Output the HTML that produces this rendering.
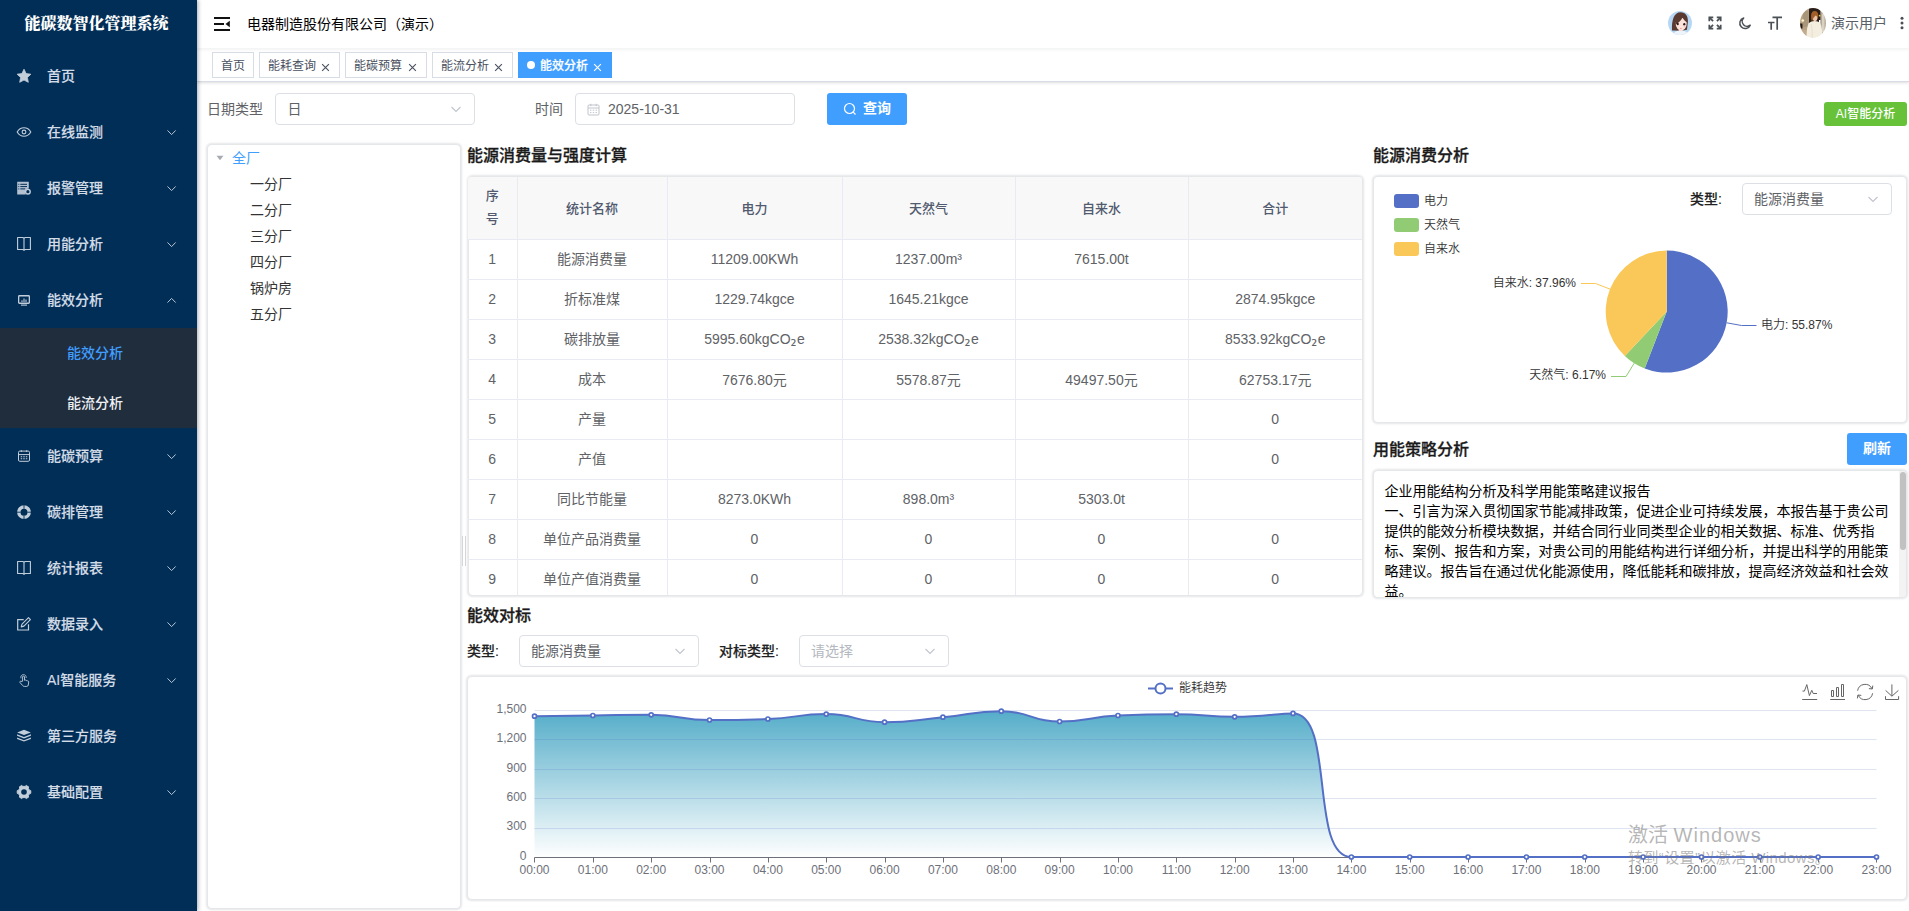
<!DOCTYPE html>
<html lang="zh-CN">
<head>
<meta charset="utf-8">
<title>能碳数智化管理系统</title>
<style>
*{box-sizing:border-box;margin:0;padding:0}
html,body{width:1909px;height:911px;overflow:hidden;background:#fff}
body{font-family:"Liberation Sans","Noto Sans CJK SC",sans-serif;font-size:14px;color:#606266;position:relative}
.abs{position:absolute}
#side{position:absolute;left:0;top:0;width:197px;height:911px;background:#002e56;box-shadow:1px 0 4px rgba(0,21,41,.35);z-index:5}
#logo{position:absolute;left:-2px;top:0;width:197px;height:48px;line-height:48px;text-align:center;color:#fff;font-weight:900;font-size:16px;font-family:"Liberation Serif","Noto Serif CJK SC",serif}
.mi{position:absolute;left:0;width:197px;height:56px;line-height:56px;color:#fff;font-weight:500;font-size:14px}
.mi .t{position:absolute;left:47px;top:0;color:#d3dce6;-webkit-text-stroke:0.150px #d3dce6}
.mi svg.ic{position:absolute;left:16px;top:20px;width:16px;height:16px;overflow:visible}
.mi svg.ar{position:absolute;left:165.600px;top:22.500px;width:11px;height:11px}
#sub{position:absolute;left:0;top:328px;width:197px;height:100px;background:#1f2d3d}
.smi{position:absolute;left:67px;height:50px;line-height:50px;font-size:14px;font-weight:500;color:#eef0f3}
#nav{position:absolute;left:197px;top:0;width:1712px;height:48px;background:#fff;box-shadow:0 1px 4px rgba(0,21,41,.08);z-index:2}
#tags{position:absolute;left:197px;top:48px;width:1712px;height:34px;background:#fff;border-bottom:1px solid #d8dce5;box-shadow:0 1px 3px 0 rgba(0,0,0,.12),0 0 3px 0 rgba(0,0,0,.04)}
.tag{position:absolute;top:4px;height:26px;line-height:26px;border:1px solid #d8dce5;color:#495060;background:#fff;font-size:12px;white-space:nowrap;text-align:left}
.tag span.n{position:absolute;top:0}
.tag.on{background:#409eff;border-color:#409eff;color:#fff;font-weight:500;-webkit-text-stroke:0.200px #fff}
.tag svg{position:absolute;top:9.500px;width:9px;height:9px}
.lbl{position:absolute;font-size:14px;color:#606266;white-space:nowrap;line-height:20px}
.lblb{position:absolute;font-size:14px;color:#222;font-weight:500;-webkit-text-stroke:0.150px #222;white-space:nowrap;line-height:20px}
.inp{position:absolute;height:32px;border:1px solid #dcdfe6;border-radius:4px;background:#fff;line-height:30px;font-size:14px;color:#606266;white-space:nowrap}
.inp .v{position:absolute;left:12px;top:0}
.inp svg.dn{position:absolute;right:12px;top:9px;width:12px;height:12px}
.card{position:absolute;background:#fff;border-radius:4px;box-shadow:0 0 2px 1.500px rgba(0,15,40,.105)}
.h{position:absolute;font-size:16px;font-weight:500;-webkit-text-stroke:0.300px #1a1a1a;color:#1a1a1a;white-space:nowrap;line-height:22px}
.btn{position:absolute;background:#409eff;color:#fff;border-radius:3px;text-align:center;font-weight:700;white-space:nowrap}
#tbl{position:absolute;left:468px;top:177px;width:894px;height:418px;overflow:hidden;border-radius:3px}
#tbl table{border-collapse:collapse;table-layout:fixed;width:894px}
#tbl td,#tbl th{border-right:1px solid #e8ebf3;border-bottom:1px solid #e8ebf3;text-align:center;font-size:14px;color:#606266;font-weight:400;height:40px;padding:0}
#tbl th{background:#f8f8f9;color:#515a6e;font-weight:500;font-size:13px;height:62px;line-height:23px;padding-top:2px}
#tbl td:last-child,#tbl th:last-child{border-right:none}
#tbl th:first-child{padding-top:0;padding-bottom:1px}
#tbl td:nth-child(2){padding-bottom:2px}
.tr{position:absolute;font-size:14px;color:#333;white-space:nowrap;line-height:26px}
#rep{position:absolute;left:1385px;top:481px;width:510px;font-size:14px;line-height:20px;color:#000;word-break:break-all}
svg text{font-family:"Liberation Sans","Noto Sans CJK SC",sans-serif;font-weight:350}
</style>
</head>
<body>
<div id="side">
<div id="logo">能碳数智化管理系统</div>
<div class="mi" style="top:48px"><svg class="ic" viewBox="0 0 16 16"><path d="M8 1.2l2.1 4.4 4.8.6-3.5 3.3.9 4.8L8 12l-4.3 2.3.9-4.8L1.1 6.2l4.8-.6z" fill="#c3cedb" stroke="#c3cedb" stroke-width="0.8" stroke-linejoin="round"/></svg><span class="t">首页</span></div>
<div class="mi" style="top:104px"><svg class="ic" viewBox="0 0 16 16"><path d="M1.2 8C2.8 5.2 5.2 3.8 8 3.8s5.200 1.400 6.800 4.200C13.200 10.800 10.800 12.200 8 12.200S2.800 10.800 1.200 8z" fill="none" stroke="#c3cedb" stroke-width="1.1"/><circle cx="8" cy="8" r="1.900" fill="none" stroke="#c3cedb" stroke-width="1.1"/></svg><span class="t">在线监测</span><svg class="ar" viewBox="0 0 11 11"><path d="M1.500 3.400l4.100 4.200 4.100-4.200" fill="none" stroke="#b9c5d3" stroke-width="1"/></svg></div>
<div class="mi" style="top:160px"><svg class="ic" viewBox="0 0 16 16"><path d="M1.2 1.800h11.600v6.800a3.700 3.700 0 0 0-3 5.900H1.200z" fill="#c3cedb" opacity=".92"/><path d="M4.300 4.300h6.700M4.300 6.600h6.700M4.300 8.900h5" stroke="#002e56" stroke-width="1"/><path d="M2.300 4.300h1M2.300 6.600h1M2.300 8.900h1" stroke="#002e56" stroke-width="1"/><circle cx="11.900" cy="11.700" r="2.300" fill="none" stroke="#c3cedb" stroke-width="1.400"/></svg><span class="t">报警管理</span><svg class="ar" viewBox="0 0 11 11"><path d="M1.500 3.400l4.100 4.200 4.100-4.200" fill="none" stroke="#b9c5d3" stroke-width="1"/></svg></div>
<div class="mi" style="top:216px"><svg class="ic" viewBox="0 0 16 16"><path d="M1.600 1.500h5.200l1.200.8 1.200-.8h5.200v12H9.200l-1.200.8-1.200-.8H1.600z M8 2.300v12" fill="none" stroke="#c3cedb" stroke-width="1.100" stroke-linejoin="round"/></svg><span class="t">用能分析</span><svg class="ar" viewBox="0 0 11 11"><path d="M1.500 3.400l4.100 4.200 4.100-4.200" fill="none" stroke="#b9c5d3" stroke-width="1"/></svg></div>
<div class="mi" style="top:272px"><svg class="ic" viewBox="0 0 16 16"><rect x="2.650" y="3.750" width="10.700" height="7.500" rx="0.800" fill="none" stroke="#c3cedb" stroke-width="1.300"/><path d="M6 10V8.300M8 10V6.500M10 10V7.500" stroke="#c3cedb" stroke-width="1.100"/><path d="M5 13.100h6" stroke="#c3cedb" stroke-width="1.100"/></svg><span class="t">能效分析</span><svg class="ar" viewBox="0 0 11 11"><path d="M1.500 7.600l4.100-4.200 4.100 4.200" fill="none" stroke="#b9c5d3" stroke-width="1"/></svg></div>
<div class="mi" style="top:428px"><svg class="ic" viewBox="0 0 16 16"><rect x="2.500" y="3.100" width="11" height="10.200" rx="1.300" fill="none" stroke="#c3cedb" stroke-width="1"/><path d="M2.500 6.600h11M5.300 2.200v1.800M10.700 2.200v1.800" stroke="#c3cedb" stroke-width="1"/><path d="M4.700 8.800h1.500M7.250 8.800h1.500M9.800 8.800h1.500M4.700 10.700h1.500M7.250 10.700h1.500M9.800 10.700h1.500" stroke="#c3cedb" stroke-width="1.100"/></svg><span class="t">能碳预算</span><svg class="ar" viewBox="0 0 11 11"><path d="M1.500 3.400l4.100 4.200 4.100-4.200" fill="none" stroke="#b9c5d3" stroke-width="1"/></svg></div>
<div class="mi" style="top:484px"><svg class="ic" viewBox="0 0 16 16"><circle cx="8" cy="8.200" r="5.200" fill="none" stroke="#c3cedb" stroke-width="3.400"/><path d="M8 0.500v4.200M8 11.700v4.200M0.500 8.200h4.200M11.300 8.200h4.200" stroke="#002e56" stroke-width="0.900"/></svg><span class="t">碳排管理</span><svg class="ar" viewBox="0 0 11 11"><path d="M1.500 3.400l4.100 4.200 4.100-4.200" fill="none" stroke="#b9c5d3" stroke-width="1"/></svg></div>
<div class="mi" style="top:540px"><svg class="ic" viewBox="0 0 16 16"><path d="M1.600 1.500h5.200l1.200.8 1.200-.8h5.200v12H9.200l-1.200.8-1.200-.8H1.600z M8 2.300v12" fill="none" stroke="#c3cedb" stroke-width="1.100" stroke-linejoin="round"/></svg><span class="t">统计报表</span><svg class="ar" viewBox="0 0 11 11"><path d="M1.500 3.400l4.100 4.200 4.100-4.200" fill="none" stroke="#b9c5d3" stroke-width="1"/></svg></div>
<div class="mi" style="top:596px"><svg class="ic" viewBox="0 0 16 16"><path d="M12.500 8.300v5.700H1.700V3.600h6" fill="none" stroke="#c3cedb" stroke-width="1.200"/><path d="M5.200 10.900l.8-2.700 6.500-6.500 1.900 1.900-6.500 6.500z" fill="none" stroke="#c3cedb" stroke-width="1.100" stroke-linejoin="round"/></svg><span class="t">数据录入</span><svg class="ar" viewBox="0 0 11 11"><path d="M1.500 3.400l4.100 4.200 4.100-4.200" fill="none" stroke="#b9c5d3" stroke-width="1"/></svg></div>
<div class="mi" style="top:652px"><svg class="ic" viewBox="0 0 16 16"><path d="M6.600 9.300V5a.95.95 0 0 1 1.900 0v3.300l.9-.3c.5-.1.900.1 1 .6.500-.3 1.100-.1 1.200.5.600-.2 1.100.2 1.100.8l-.4 3.100c-.1.800-.7 1.400-1.500 1.400H8.300c-.7 0-1.200-.3-1.600-.8L3.900 10.400c-.5-.7.400-1.500 1.100-1z" fill="none" stroke="#c3cedb" stroke-width="0.900" stroke-linejoin="round"/><path d="M5 6.300a2.700 2.700 0 1 1 5.100-.3" fill="none" stroke="#c3cedb" stroke-width="0.800"/></svg><span class="t">AI智能服务</span><svg class="ar" viewBox="0 0 11 11"><path d="M1.500 3.400l4.100 4.200 4.100-4.200" fill="none" stroke="#b9c5d3" stroke-width="1"/></svg></div>
<div class="mi" style="top:708px"><svg class="ic" viewBox="0 0 16 16"><path d="M8 1.700l6.900 2.700L8 7.100 1.100 4.400z" fill="#c3cedb"/><path d="M1.100 6.300L8 9l6.900-2.700v1.400L8 10.400 1.100 7.700zM1.100 9.500L8 12.200l6.900-2.700v1.400L8 13.600 1.100 10.900z" fill="#c3cedb"/></svg><span class="t">第三方服务</span></div>
<div class="mi" style="top:764px"><svg class="ic" viewBox="0 0 16 16"><path d="M14.76 6.63 L14.76 9.37 L13.40 9.81 L12.27 11.77 L12.57 13.17 L10.19 14.54 L9.13 13.59 L6.87 13.59 L5.81 14.54 L3.43 13.17 L3.73 11.77 L2.60 9.81 L1.24 9.37 L1.24 6.63 L2.60 6.19 L3.73 4.23 L3.43 2.83 L5.81 1.46 L6.87 2.41 L9.13 2.41 L10.19 1.46 L12.57 2.83 L12.27 4.23 L13.40 6.19z" fill="#c3cedb" stroke="#c3cedb" stroke-width="1" stroke-linejoin="round"/><circle cx="8" cy="8" r="2.800" fill="#002e56"/></svg><span class="t">基础配置</span><svg class="ar" viewBox="0 0 11 11"><path d="M1.500 3.400l4.100 4.200 4.100-4.200" fill="none" stroke="#b9c5d3" stroke-width="1"/></svg></div>
<div id="sub"><div class="smi" style="top:0;color:#409eff">能效分析</div><div class="smi" style="top:50px">能流分析</div></div>
</div>
<div id="nav">
<svg class="abs" style="left:16px;top:15px" width="18" height="18" viewBox="0 0 18 18"><path d="M1 3h16M1 9h10M1 15h16" stroke="#111" stroke-width="1.900"/><path d="M16.800 5.800v6.400l-4.300-3.200z" fill="#111"/></svg>
<div class="abs" style="left:50px;top:0;line-height:48.500px;font-size:14px;color:#000;white-space:nowrap">电器制造股份有限公司（演示）</div>
<svg class="abs" style="left:1471px;top:11px" width="24" height="24" viewBox="0 0 24 24"><defs><clipPath id="c1"><circle cx="12" cy="12" r="12"/></clipPath><filter id="b1" x="-10%" y="-10%" width="120%" height="120%"><feGaussianBlur stdDeviation="0.350"/></filter></defs><circle cx="12" cy="12" r="12" fill="#b5d8f7"/><g clip-path="url(#c1)" filter="url(#b1)"><path d="M4 19.500C3.500 9 6 1.200 12.500 1.200c5.500 0 8 4.500 7.300 10.300l-.8 7.300-5.500 1z" fill="#5a3a31"/><path d="M10.800 17h4v7h-4z" fill="#f7d3c6"/><path d="M5 24c1-3 3.500-4 5.800-4.200h4c2.500.2 4.200 1.200 5.200 4.200z" fill="#eef4fa"/><ellipse cx="13.200" cy="13" rx="5.500" ry="6.300" fill="#fbe2da"/><path d="M7.500 13.500C7 8 10 4.500 15.500 4.200c2.500 1 4 3.500 4 7.300-2.500-1.200-4.200-3-5-5.200-1.200 3-3.500 5.500-7 7.200z" fill="#5a3a31"/><ellipse cx="9.700" cy="13" rx="1.100" ry="1.200" fill="#2e1a18"/><ellipse cx="16.300" cy="13.300" rx="1.100" ry="1.200" fill="#2e1a18"/><ellipse cx="12.900" cy="17.400" rx="0.900" ry="0.500" fill="#ee8c8c"/><circle cx="16.800" cy="15.600" r="1.100" fill="#f9c3bd" opacity=".7"/></g></svg>
<svg class="abs" style="left:1511px;top:16px" width="14" height="14" viewBox="0 0 16 16"><g fill="none" stroke="#4a5056" stroke-width="2"><path d="M1.500 6V1.500H6M10 1.500h4.500V6M14.500 10v4.500H10M6 14.500H1.500V10"/><path d="M1.800 1.800l4 4M14.200 1.800l-4 4M14.200 14.200l-4-4M1.800 14.200l4-4"/></g></svg>
<svg class="abs" style="left:1541px;top:16px" width="14" height="14" viewBox="0 0 16 16"><path d="M6.500 2.200A6.200 6.200 0 1 0 14 10.500 5.600 5.600 0 0 1 6.500 2.200z" fill="none" stroke="#4a5056" stroke-width="1.700" stroke-linejoin="round"/></svg>
<svg class="abs" style="left:1570px;top:15px" width="16" height="16" viewBox="0 0 16 16"><path d="M5.500 2.300h9.500M10.200 2.300v12.500M1 7.500h6.500M4.200 7.500v7.300" fill="none" stroke="#4a5056" stroke-width="1.700"/></svg>
<svg class="abs" style="left:1603px;top:8px" width="26" height="30" viewBox="0 0 26 30"><defs><clipPath id="c2"><ellipse cx="13" cy="15" rx="13" ry="15"/></clipPath><filter id="b2" x="-10%" y="-10%" width="120%" height="120%"><feGaussianBlur stdDeviation="0.600"/></filter></defs><g clip-path="url(#c2)"><g filter="url(#b2)"><rect x="-2" y="-2" width="30" height="34" fill="#b8a284"/><rect x="3" y="3" width="5.500" height="16" fill="#a8967a"/><rect x="9" y="-2" width="11.600" height="17" fill="#2b1e14"/><rect x="20.600" y="-2" width="8" height="28" fill="#b5aa98"/><rect x="22" y="6" width="2.500" height="18" fill="#d9d2c4"/><path d="M-1 22h8v10h-8z" fill="#c2aa8c"/><rect x="0" y="15.500" width="2.500" height="5" fill="#2a1c12"/><circle cx="2.800" cy="12.500" r="1.300" fill="#fff3c8"/><circle cx="19.600" cy="7.700" r="0.900" fill="#e8c860"/><ellipse cx="14.700" cy="7.500" rx="3.500" ry="4.500" fill="#a35f2c"/><ellipse cx="15" cy="10.300" rx="2.300" ry="2.800" fill="#e9c4ae"/><path d="M11.300 9c.3-4 2-5.500 4-5.500 1 1.500.5 4-1 5.500-1 1-1.800 2.500-2 4.500-1-1-1.200-3-1-4.500z" fill="#a35f2c"/><rect x="19" y="12" width="1.500" height="3" fill="#fff"/><path d="M6.500 32c0-8 .5-13 2-16.500 2-1.800 4-2.500 6-2.500s4.500.7 6 2.500c1.500 4 2 9 2 16.500z" fill="#f4eee0"/><path d="M11 16c1 3 1.500 8 1 14" stroke="#e4d9c6" stroke-width="0.800" fill="none"/></g></g></svg>
<div class="abs" style="left:1634px;top:0;line-height:46px;font-size:14px;color:#5a5e66;white-space:nowrap">演示用户</div>
<svg class="abs" style="left:1703px;top:16px" width="4" height="14" viewBox="0 0 4 14"><circle cx="2" cy="2.200" r="1.500" fill="#4a5056"/><circle cx="2" cy="7" r="1.500" fill="#4a5056"/><circle cx="2" cy="11.800" r="1.500" fill="#4a5056"/></svg>
</div>
<div id="tags">
<div class="tag" style="left:15px;width:42px"><span class="n" style="left:8px">首页</span></div>
<div class="tag" style="left:62px;width:81px"><span class="n" style="left:8px">能耗查询</span><svg style="left:61px" viewBox="0 0 8 8"><path d="M1 1l6 6M7 1l-6 6" stroke="#495060" stroke-width="1"/></svg></div>
<div class="tag" style="left:148px;width:82px"><span class="n" style="left:8px">能碳预算</span><svg style="left:62px" viewBox="0 0 8 8"><path d="M1 1l6 6M7 1l-6 6" stroke="#495060" stroke-width="1"/></svg></div>
<div class="tag" style="left:235px;width:81px"><span class="n" style="left:8px">能流分析</span><svg style="left:61px" viewBox="0 0 8 8"><path d="M1 1l6 6M7 1l-6 6" stroke="#495060" stroke-width="1"/></svg></div>
<div class="tag on" style="left:321px;width:94px"><span class="abs" style="left:8px;top:8px;width:8px;height:8px;border-radius:50%;background:#fff"></span><span class="n" style="left:21px">能效分析</span><svg style="left:74px" viewBox="0 0 8 8"><path d="M1 1l6 6M7 1l-6 6" stroke="#fff" stroke-width="1"/></svg></div>
</div>
<div class="lbl" style="left:207px;top:99px">日期类型</div>
<div class="inp" style="left:275px;top:93px;width:200px"><span class="v" style="left:11.500px">日</span><svg class="dn" viewBox="0 0 12 12"><path d="M1.500 4l4.500 4.500L10.500 4" fill="none" stroke="#c0c4cc" stroke-width="1.100"/></svg></div>
<div class="lbl" style="left:535px;top:99px">时间</div>
<div class="inp" style="left:575px;top:93px;width:220px"><svg class="abs" style="left:11px;top:9px" width="13" height="13" viewBox="0 0 13 13"><rect x="1" y="2" width="11" height="10" rx="1" fill="none" stroke="#c0c4cc" stroke-width="1"/><path d="M1 5h11M3.800 0.800v2.400M9.200 0.800v2.400" stroke="#c0c4cc" stroke-width="1"/><path d="M3 7.200h1.400M5.800 7.200h1.400M8.600 7.200h1.400M3 9.600h1.400M5.800 9.600h1.400M8.600 9.600h1.400" stroke="#c0c4cc" stroke-width="1"/></svg><span class="v" style="left:32px">2025-10-31</span></div>
<div class="btn" style="left:827px;top:93px;width:80px;height:32px;line-height:31px;font-size:14px"><svg class="abs" style="left:16px;top:9px" width="14" height="14" viewBox="0 0 14 14"><circle cx="6.500" cy="6.500" r="5" fill="none" stroke="#fff" stroke-width="1.200"/><path d="M10.200 10.200l2.300 2.300" stroke="#fff" stroke-width="1.200"/></svg><span class="abs" style="left:36px;top:0">查询</span></div>
<div class="btn" style="left:1824px;top:102px;width:83px;height:24px;line-height:24px;font-size:12px;background:#67c23a;border-radius:3px;font-weight:500">AI智能分析</div>
<div class="card" style="left:208px;top:145px;width:252px;height:763px"></div>
<svg class="abs" style="left:216px;top:154px" width="8" height="8" viewBox="0 0 8 8"><path d="M0.500 1.800h7L4 6.200z" fill="#a8abb2"/></svg>
<div class="tr" style="left:232px;top:145px;color:#409eff">全厂</div>
<div class="tr" style="left:250px;top:171px">一分厂</div>
<div class="tr" style="left:250px;top:197px">二分厂</div>
<div class="tr" style="left:250px;top:223px">三分厂</div>
<div class="tr" style="left:250px;top:249px">四分厂</div>
<div class="tr" style="left:250px;top:275px">锅炉房</div>
<div class="tr" style="left:250px;top:301px">五分厂</div>
<div class="abs" style="left:462px;top:536px;width:1px;height:30px;background:#d6d6d6"></div><div class="abs" style="left:465px;top:536px;width:1px;height:30px;background:#d6d6d6"></div>
<div class="h" style="left:467px;top:145px">能源消费量与强度计算</div>
<div class="card" style="left:469px;top:177px;width:893px;height:418px"></div>
<div id="tbl"><table><colgroup><col style="width:49px"><col style="width:150px"><col style="width:175px"><col style="width:173px"><col style="width:173px"><col style="width:174px"></colgroup>
<tr><th>序<br>号</th><th>统计名称</th><th>电力</th><th>天然气</th><th>自来水</th><th>合计</th></tr>
<tr><td>1</td><td>能源消费量</td><td>11209.00KWh</td><td>1237.00m³</td><td>7615.00t</td><td></td></tr>
<tr><td>2</td><td>折标准煤</td><td>1229.74kgce</td><td>1645.21kgce</td><td></td><td>2874.95kgce</td></tr>
<tr><td>3</td><td>碳排放量</td><td>5995.60kgCO<span style="font-family:'DejaVu Sans',sans-serif;font-size:15px;line-height:0;letter-spacing:0.500px;position:relative;top:1.500px">₂</span>e</td><td>2538.32kgCO<span style="font-family:'DejaVu Sans',sans-serif;font-size:15px;line-height:0;letter-spacing:0.500px;position:relative;top:1.500px">₂</span>e</td><td></td><td>8533.92kgCO<span style="font-family:'DejaVu Sans',sans-serif;font-size:15px;line-height:0;letter-spacing:0.500px;position:relative;top:1.500px">₂</span>e</td></tr>
<tr><td>4</td><td>成本</td><td>7676.80元</td><td>5578.87元</td><td>49497.50元</td><td>62753.17元</td></tr>
<tr><td>5</td><td>产量</td><td></td><td></td><td></td><td>0</td></tr>
<tr><td>6</td><td>产值</td><td></td><td></td><td></td><td>0</td></tr>
<tr><td>7</td><td>同比节能量</td><td>8273.0KWh</td><td>898.0m³</td><td>5303.0t</td><td></td></tr>
<tr><td>8</td><td>单位产品消费量</td><td>0</td><td>0</td><td>0</td><td>0</td></tr>
<tr><td>9</td><td>单位产值消费量</td><td>0</td><td>0</td><td>0</td><td>0</td></tr>
</table></div><div class="h" style="left:1373px;top:145px">能源消费分析</div>
<div class="card" style="left:1374px;top:177px;width:532px;height:245px"></div>
<div class="lblb" style="left:1690px;top:189px">类型:</div>
<div class="inp" style="left:1742px;top:183px;width:150px"><span class="v" style="left:11px">能源消费量</span><svg class="dn" viewBox="0 0 12 12"><path d="M1.500 4l4.500 4.500L10.500 4" fill="none" stroke="#c0c4cc" stroke-width="1.100"/></svg></div>
<svg class="abs" style="left:1374px;top:177px" width="532" height="245" viewBox="0 0 532 245"><path d="M292.70 134.60 L292.70 73.60 A61 61 0 1 1 270.71 191.50 z" fill="#5470c6"/><path d="M292.70 134.60 L270.71 191.50 A61 61 0 0 1 250.83 178.96 z" fill="#91cc75"/><path d="M292.70 134.60 L250.83 178.96 A61 61 0 0 1 292.70 73.60 z" fill="#fac858"/><rect x="20" y="17" width="25" height="14" rx="3" fill="#5470c6"/><text x="50" y="28" font-size="12" fill="#333">电力</text><rect x="20" y="41" width="25" height="14" rx="3" fill="#91cc75"/><text x="50" y="52" font-size="12" fill="#333">天然气</text><rect x="20" y="65" width="25" height="14" rx="3" fill="#fac858"/><text x="50" y="76" font-size="12" fill="#333">自来水</text><path d="M352.7 145.8 L367.5 148.5 L382.5 148.5" fill="none" stroke="#5470c6" stroke-width="1"/><text x="387" y="152" font-size="12" fill="#333">电力: 55.87%</text><path d="M260.2 186.2 L252.0 199.5 L237.0 199.5" fill="none" stroke="#91cc75" stroke-width="1"/><text x="232" y="202" font-size="12" fill="#333" text-anchor="end">天然气: 6.17%</text><path d="M236.0 112.1 L221.5 106.5 L207.0 106.5" fill="none" stroke="#fac858" stroke-width="1"/><text x="202" y="110" font-size="12" fill="#333" text-anchor="end">自来水: 37.96%</text></svg>
<div class="h" style="left:1373px;top:439px">用能策略分析</div>
<div class="btn" style="left:1847px;top:433px;width:60px;height:32px;line-height:31px;font-size:14px">刷新</div>
<div class="card" style="left:1374px;top:471px;width:532px;height:126px;overflow:hidden"><div class="abs" style="left:525px;top:0;width:7px;height:127px;background:#f3f3f3"></div><div class="abs" style="left:526px;top:1px;width:6px;height:78px;border-radius:3px;background:#c1c1c1"></div></div>
<div class="abs" style="left:1374px;top:471px;width:520px;height:126px;overflow:hidden"><div id="rep" style="left:10.500px;top:10px">企业用能结构分析及科学用能策略建议报告<br>一、引言为深入贯彻国家节能减排政策，促进企业可持续发展，本报告基于贵公司<br>提供的能效分析模块数据，并结合同行业同类型企业的相关数据、标准、优秀指<br>标、案例、报告和方案，对贵公司的用能结构进行详细分析，并提出科学的用能策<br>略建议。报告旨在通过优化能源使用，降低能耗和碳排放，提高经济效益和社会效<br>益。<br>二、用能结构分析</div></div>
<div class="h" style="left:467px;top:605px">能效对标</div>
<div class="lblb" style="left:467px;top:641px">类型:</div>
<div class="inp" style="left:519px;top:635px;width:180px"><span class="v" style="left:11px">能源消费量</span><svg class="dn" viewBox="0 0 12 12"><path d="M1.500 4l4.500 4.500L10.500 4" fill="none" stroke="#c0c4cc" stroke-width="1.100"/></svg></div>
<div class="lblb" style="left:719px;top:641px">对标类型:</div>
<div class="inp" style="left:799px;top:635px;width:150px"><span class="v" style="left:11px;color:#b4b8c0">请选择</span><svg class="dn" viewBox="0 0 12 12"><path d="M1.500 4l4.500 4.500L10.500 4" fill="none" stroke="#c0c4cc" stroke-width="1.100"/></svg></div>
<div class="card" style="left:468px;top:677px;width:1438px;height:222px"></div>
<svg class="abs" style="left:468px;top:677px" width="1438" height="222" viewBox="0 0 1438 222"><defs><linearGradient id="ga" x1="0" y1="0" x2="0" y2="1"><stop offset="0" stop-color="#55adc9"/><stop offset="1" stop-color="#ffffff"/></linearGradient></defs><path d="M66.5 151.5 H1408.5" stroke="#dfe5f0" stroke-width="1"/><path d="M66.5 121.5 H1408.5" stroke="#dfe5f0" stroke-width="1"/><path d="M66.5 92.5 H1408.5" stroke="#dfe5f0" stroke-width="1"/><path d="M66.5 62.5 H1408.5" stroke="#dfe5f0" stroke-width="1"/><path d="M66.5 33.5 H1408.5" stroke="#dfe5f0" stroke-width="1"/><text x="58.5" y="182.7" font-size="12" fill="#6e7079" text-anchor="end">0</text><text x="58.5" y="153.3" font-size="12" fill="#6e7079" text-anchor="end">300</text><text x="58.5" y="123.9" font-size="12" fill="#6e7079" text-anchor="end">600</text><text x="58.5" y="94.5" font-size="12" fill="#6e7079" text-anchor="end">900</text><text x="58.5" y="65.1" font-size="12" fill="#6e7079" text-anchor="end">1,200</text><text x="58.5" y="35.7" font-size="12" fill="#6e7079" text-anchor="end">1,500</text><clipPath id="ca"><path d="M66.50 39.20 C66.50 39.20 95.67 38.85 124.85 38.50 C154.02 38.15 154.08 37.80 183.20 37.80 C212.43 37.80 212.31 43.00 241.54 43.00 C270.66 43.00 270.77 43.00 299.89 42.00 C329.11 41.00 329.15 37.10 358.24 37.10 C387.50 37.10 387.33 45.20 416.59 45.20 C445.68 45.20 445.78 42.95 474.93 40.20 C504.13 37.45 504.26 34.20 533.28 34.20 C562.60 34.20 562.31 44.50 591.63 44.50 C620.66 44.50 620.73 39.81 649.98 38.50 C679.08 37.20 679.16 37.20 708.33 37.20 C737.51 37.20 737.51 39.80 766.67 39.80 C795.86 39.80 809.04 36.40 825.02 36.40 C867.39 36.40 840.98 180.00 883.37 180.00 C899.33 180.00 912.54 180.00 941.72 180.00 C970.89 180.00 970.89 180.00 1000.07 180.00 C1029.24 180.00 1029.24 180.00 1058.41 180.00 C1087.59 180.00 1087.59 180.00 1116.76 180.00 C1145.93 180.00 1145.93 180.00 1175.11 180.00 C1204.28 180.00 1204.28 180.00 1233.46 180.00 C1262.63 180.00 1262.63 180.00 1291.80 180.00 C1320.98 180.00 1320.98 180.00 1350.15 180.00 C1379.33 180.00 1408.50 180.00 1408.50 180.00 L1408.50 180.50 L66.50 180.50 z"/></clipPath><path d="M66.50 39.20 C66.50 39.20 95.67 38.85 124.85 38.50 C154.02 38.15 154.08 37.80 183.20 37.80 C212.43 37.80 212.31 43.00 241.54 43.00 C270.66 43.00 270.77 43.00 299.89 42.00 C329.11 41.00 329.15 37.10 358.24 37.10 C387.50 37.10 387.33 45.20 416.59 45.20 C445.68 45.20 445.78 42.95 474.93 40.20 C504.13 37.45 504.26 34.20 533.28 34.20 C562.60 34.20 562.31 44.50 591.63 44.50 C620.66 44.50 620.73 39.81 649.98 38.50 C679.08 37.20 679.16 37.20 708.33 37.20 C737.51 37.20 737.51 39.80 766.67 39.80 C795.86 39.80 809.04 36.40 825.02 36.40 C867.39 36.40 840.98 180.00 883.37 180.00 C899.33 180.00 912.54 180.00 941.72 180.00 C970.89 180.00 970.89 180.00 1000.07 180.00 C1029.24 180.00 1029.24 180.00 1058.41 180.00 C1087.59 180.00 1087.59 180.00 1116.76 180.00 C1145.93 180.00 1145.93 180.00 1175.11 180.00 C1204.28 180.00 1204.28 180.00 1233.46 180.00 C1262.63 180.00 1262.63 180.00 1291.80 180.00 C1320.98 180.00 1320.98 180.00 1350.15 180.00 C1379.33 180.00 1408.50 180.00 1408.50 180.00 L1408.50 180.50 L66.50 180.50 z" fill="url(#ga)"/><g clip-path="url(#ca)"><path d="M66.5 151.5 H883.4" stroke="rgba(84,112,198,0.190)" stroke-width="1"/><path d="M66.5 121.5 H883.4" stroke="rgba(84,112,198,0.190)" stroke-width="1"/><path d="M66.5 92.5 H883.4" stroke="rgba(84,112,198,0.190)" stroke-width="1"/><path d="M66.5 62.5 H883.4" stroke="rgba(84,112,198,0.190)" stroke-width="1"/><path d="M66.5 33.5 H883.4" stroke="rgba(84,112,198,0.190)" stroke-width="1"/></g><path d="M66.5 180.5 H1408.5" stroke="#6e7079" stroke-width="1"/><path d="M66.5 180.5 v5" stroke="#6e7079" stroke-width="1"/><text x="66.5" y="197.0" font-size="12" fill="#6e7079" text-anchor="middle">00:00</text><path d="M125.5 180.5 v5" stroke="#6e7079" stroke-width="1"/><text x="124.8" y="197.0" font-size="12" fill="#6e7079" text-anchor="middle">01:00</text><path d="M183.5 180.5 v5" stroke="#6e7079" stroke-width="1"/><text x="183.2" y="197.0" font-size="12" fill="#6e7079" text-anchor="middle">02:00</text><path d="M242.5 180.5 v5" stroke="#6e7079" stroke-width="1"/><text x="241.5" y="197.0" font-size="12" fill="#6e7079" text-anchor="middle">03:00</text><path d="M300.5 180.5 v5" stroke="#6e7079" stroke-width="1"/><text x="299.9" y="197.0" font-size="12" fill="#6e7079" text-anchor="middle">04:00</text><path d="M358.5 180.5 v5" stroke="#6e7079" stroke-width="1"/><text x="358.2" y="197.0" font-size="12" fill="#6e7079" text-anchor="middle">05:00</text><path d="M417.5 180.5 v5" stroke="#6e7079" stroke-width="1"/><text x="416.6" y="197.0" font-size="12" fill="#6e7079" text-anchor="middle">06:00</text><path d="M475.5 180.5 v5" stroke="#6e7079" stroke-width="1"/><text x="474.9" y="197.0" font-size="12" fill="#6e7079" text-anchor="middle">07:00</text><path d="M533.5 180.5 v5" stroke="#6e7079" stroke-width="1"/><text x="533.3" y="197.0" font-size="12" fill="#6e7079" text-anchor="middle">08:00</text><path d="M592.5 180.5 v5" stroke="#6e7079" stroke-width="1"/><text x="591.6" y="197.0" font-size="12" fill="#6e7079" text-anchor="middle">09:00</text><path d="M650.5 180.5 v5" stroke="#6e7079" stroke-width="1"/><text x="650.0" y="197.0" font-size="12" fill="#6e7079" text-anchor="middle">10:00</text><path d="M708.5 180.5 v5" stroke="#6e7079" stroke-width="1"/><text x="708.3" y="197.0" font-size="12" fill="#6e7079" text-anchor="middle">11:00</text><path d="M767.5 180.5 v5" stroke="#6e7079" stroke-width="1"/><text x="766.7" y="197.0" font-size="12" fill="#6e7079" text-anchor="middle">12:00</text><path d="M825.5 180.5 v5" stroke="#6e7079" stroke-width="1"/><text x="825.0" y="197.0" font-size="12" fill="#6e7079" text-anchor="middle">13:00</text><path d="M883.5 180.5 v5" stroke="#6e7079" stroke-width="1"/><text x="883.4" y="197.0" font-size="12" fill="#6e7079" text-anchor="middle">14:00</text><path d="M942.5 180.5 v5" stroke="#6e7079" stroke-width="1"/><text x="941.7" y="197.0" font-size="12" fill="#6e7079" text-anchor="middle">15:00</text><path d="M1000.5 180.5 v5" stroke="#6e7079" stroke-width="1"/><text x="1000.1" y="197.0" font-size="12" fill="#6e7079" text-anchor="middle">16:00</text><path d="M1058.5 180.5 v5" stroke="#6e7079" stroke-width="1"/><text x="1058.4" y="197.0" font-size="12" fill="#6e7079" text-anchor="middle">17:00</text><path d="M1117.5 180.5 v5" stroke="#6e7079" stroke-width="1"/><text x="1116.8" y="197.0" font-size="12" fill="#6e7079" text-anchor="middle">18:00</text><path d="M1175.5 180.5 v5" stroke="#6e7079" stroke-width="1"/><text x="1175.1" y="197.0" font-size="12" fill="#6e7079" text-anchor="middle">19:00</text><path d="M1233.5 180.5 v5" stroke="#6e7079" stroke-width="1"/><text x="1233.5" y="197.0" font-size="12" fill="#6e7079" text-anchor="middle">20:00</text><path d="M1292.5 180.5 v5" stroke="#6e7079" stroke-width="1"/><text x="1291.8" y="197.0" font-size="12" fill="#6e7079" text-anchor="middle">21:00</text><path d="M1350.5 180.5 v5" stroke="#6e7079" stroke-width="1"/><text x="1350.2" y="197.0" font-size="12" fill="#6e7079" text-anchor="middle">22:00</text><path d="M1408.5 180.5 v5" stroke="#6e7079" stroke-width="1"/><text x="1408.5" y="197.0" font-size="12" fill="#6e7079" text-anchor="middle">23:00</text><path d="M66.50 39.20 C66.50 39.20 95.67 38.85 124.85 38.50 C154.02 38.15 154.08 37.80 183.20 37.80 C212.43 37.80 212.31 43.00 241.54 43.00 C270.66 43.00 270.77 43.00 299.89 42.00 C329.11 41.00 329.15 37.10 358.24 37.10 C387.50 37.10 387.33 45.20 416.59 45.20 C445.68 45.20 445.78 42.95 474.93 40.20 C504.13 37.45 504.26 34.20 533.28 34.20 C562.60 34.20 562.31 44.50 591.63 44.50 C620.66 44.50 620.73 39.81 649.98 38.50 C679.08 37.20 679.16 37.20 708.33 37.20 C737.51 37.20 737.51 39.80 766.67 39.80 C795.86 39.80 809.04 36.40 825.02 36.40 C867.39 36.40 840.98 180.00 883.37 180.00 C899.33 180.00 912.54 180.00 941.72 180.00 C970.89 180.00 970.89 180.00 1000.07 180.00 C1029.24 180.00 1029.24 180.00 1058.41 180.00 C1087.59 180.00 1087.59 180.00 1116.76 180.00 C1145.93 180.00 1145.93 180.00 1175.11 180.00 C1204.28 180.00 1204.28 180.00 1233.46 180.00 C1262.63 180.00 1262.63 180.00 1291.80 180.00 C1320.98 180.00 1320.98 180.00 1350.15 180.00 C1379.33 180.00 1408.50 180.00 1408.50 180.00" fill="none" stroke="#5470c6" stroke-width="2"/><circle cx="66.50" cy="39.20" r="2" fill="#fff" stroke="#5470c6" stroke-width="1.700"/><circle cx="124.85" cy="38.50" r="2" fill="#fff" stroke="#5470c6" stroke-width="1.700"/><circle cx="183.20" cy="37.80" r="2" fill="#fff" stroke="#5470c6" stroke-width="1.700"/><circle cx="241.54" cy="43.00" r="2" fill="#fff" stroke="#5470c6" stroke-width="1.700"/><circle cx="299.89" cy="42.00" r="2" fill="#fff" stroke="#5470c6" stroke-width="1.700"/><circle cx="358.24" cy="37.10" r="2" fill="#fff" stroke="#5470c6" stroke-width="1.700"/><circle cx="416.59" cy="45.20" r="2" fill="#fff" stroke="#5470c6" stroke-width="1.700"/><circle cx="474.93" cy="40.20" r="2" fill="#fff" stroke="#5470c6" stroke-width="1.700"/><circle cx="533.28" cy="34.20" r="2" fill="#fff" stroke="#5470c6" stroke-width="1.700"/><circle cx="591.63" cy="44.50" r="2" fill="#fff" stroke="#5470c6" stroke-width="1.700"/><circle cx="649.98" cy="38.50" r="2" fill="#fff" stroke="#5470c6" stroke-width="1.700"/><circle cx="708.33" cy="37.20" r="2" fill="#fff" stroke="#5470c6" stroke-width="1.700"/><circle cx="766.67" cy="39.80" r="2" fill="#fff" stroke="#5470c6" stroke-width="1.700"/><circle cx="825.02" cy="36.40" r="2" fill="#fff" stroke="#5470c6" stroke-width="1.700"/><circle cx="883.37" cy="180.00" r="2" fill="#fff" stroke="#5470c6" stroke-width="1.700"/><circle cx="941.72" cy="180.00" r="2" fill="#fff" stroke="#5470c6" stroke-width="1.700"/><circle cx="1000.07" cy="180.00" r="2" fill="#fff" stroke="#5470c6" stroke-width="1.700"/><circle cx="1058.41" cy="180.00" r="2" fill="#fff" stroke="#5470c6" stroke-width="1.700"/><circle cx="1116.76" cy="180.00" r="2" fill="#fff" stroke="#5470c6" stroke-width="1.700"/><circle cx="1175.11" cy="180.00" r="2" fill="#fff" stroke="#5470c6" stroke-width="1.700"/><circle cx="1233.46" cy="180.00" r="2" fill="#fff" stroke="#5470c6" stroke-width="1.700"/><circle cx="1291.80" cy="180.00" r="2" fill="#fff" stroke="#5470c6" stroke-width="1.700"/><circle cx="1350.15" cy="180.00" r="2" fill="#fff" stroke="#5470c6" stroke-width="1.700"/><circle cx="1408.50" cy="180.00" r="2" fill="#fff" stroke="#5470c6" stroke-width="1.700"/><path d="M680 11.5 h25" stroke="#5470c6" stroke-width="2"/><circle cx="692.5" cy="11.5" r="5" fill="#fff" stroke="#5470c6" stroke-width="2"/><text x="711" y="15" font-size="12" fill="#333">能耗趋势</text><g fill="none" stroke="#666" stroke-width="1"><path d="M1334.5 14.1 L1336.4 14.1 L1338.8 7.6 L1341.4 18.6 L1343.8 13.3 L1345.2 16.5 L1349.0 16.5 M1334.2 22.5 L1349.2 22.5"/><path d="M1363.5 13.5 h2v6h-2z M1368.5 10.5 h2v9h-2z M1373.5 7.5 h2v12h-2z M1362.2 22.5 L1377.0 22.5"/><path d="M1389.6 13.7 A7.6 7.6 0 0 1 1404.0 11.8"/><path d="M1404.6 16.3 A7.6 7.6 0 0 1 1390.2 18.2"/><path d="M1404.8 8.6 L1404.3 12.0 L1400.9 11.6"/><path d="M1389.4 21.4 L1389.9 18.0 L1393.3 18.4"/><path d="M1423.9 7.4 L1423.9 19.0 M1417.6 13.4 L1423.9 19.2 L1430.4 13.4 M1417.5 19.2 L1417.5 22.5 L1430.6 22.5 L1430.6 19.2"/></g></svg>
<div class="abs" style="left:1628px;top:820.500px;font-size:20px;line-height:28px;color:rgba(120,120,120,.55);white-space:nowrap;z-index:9">激活 <span style="letter-spacing:1px">Windows</span></div>
<div class="abs" style="left:1628px;top:848px;font-size:15px;line-height:20px;color:rgba(120,120,120,.55);white-space:nowrap;z-index:9;letter-spacing:0.400px">转到“设置”以激活 Windows。</div></body></html>
